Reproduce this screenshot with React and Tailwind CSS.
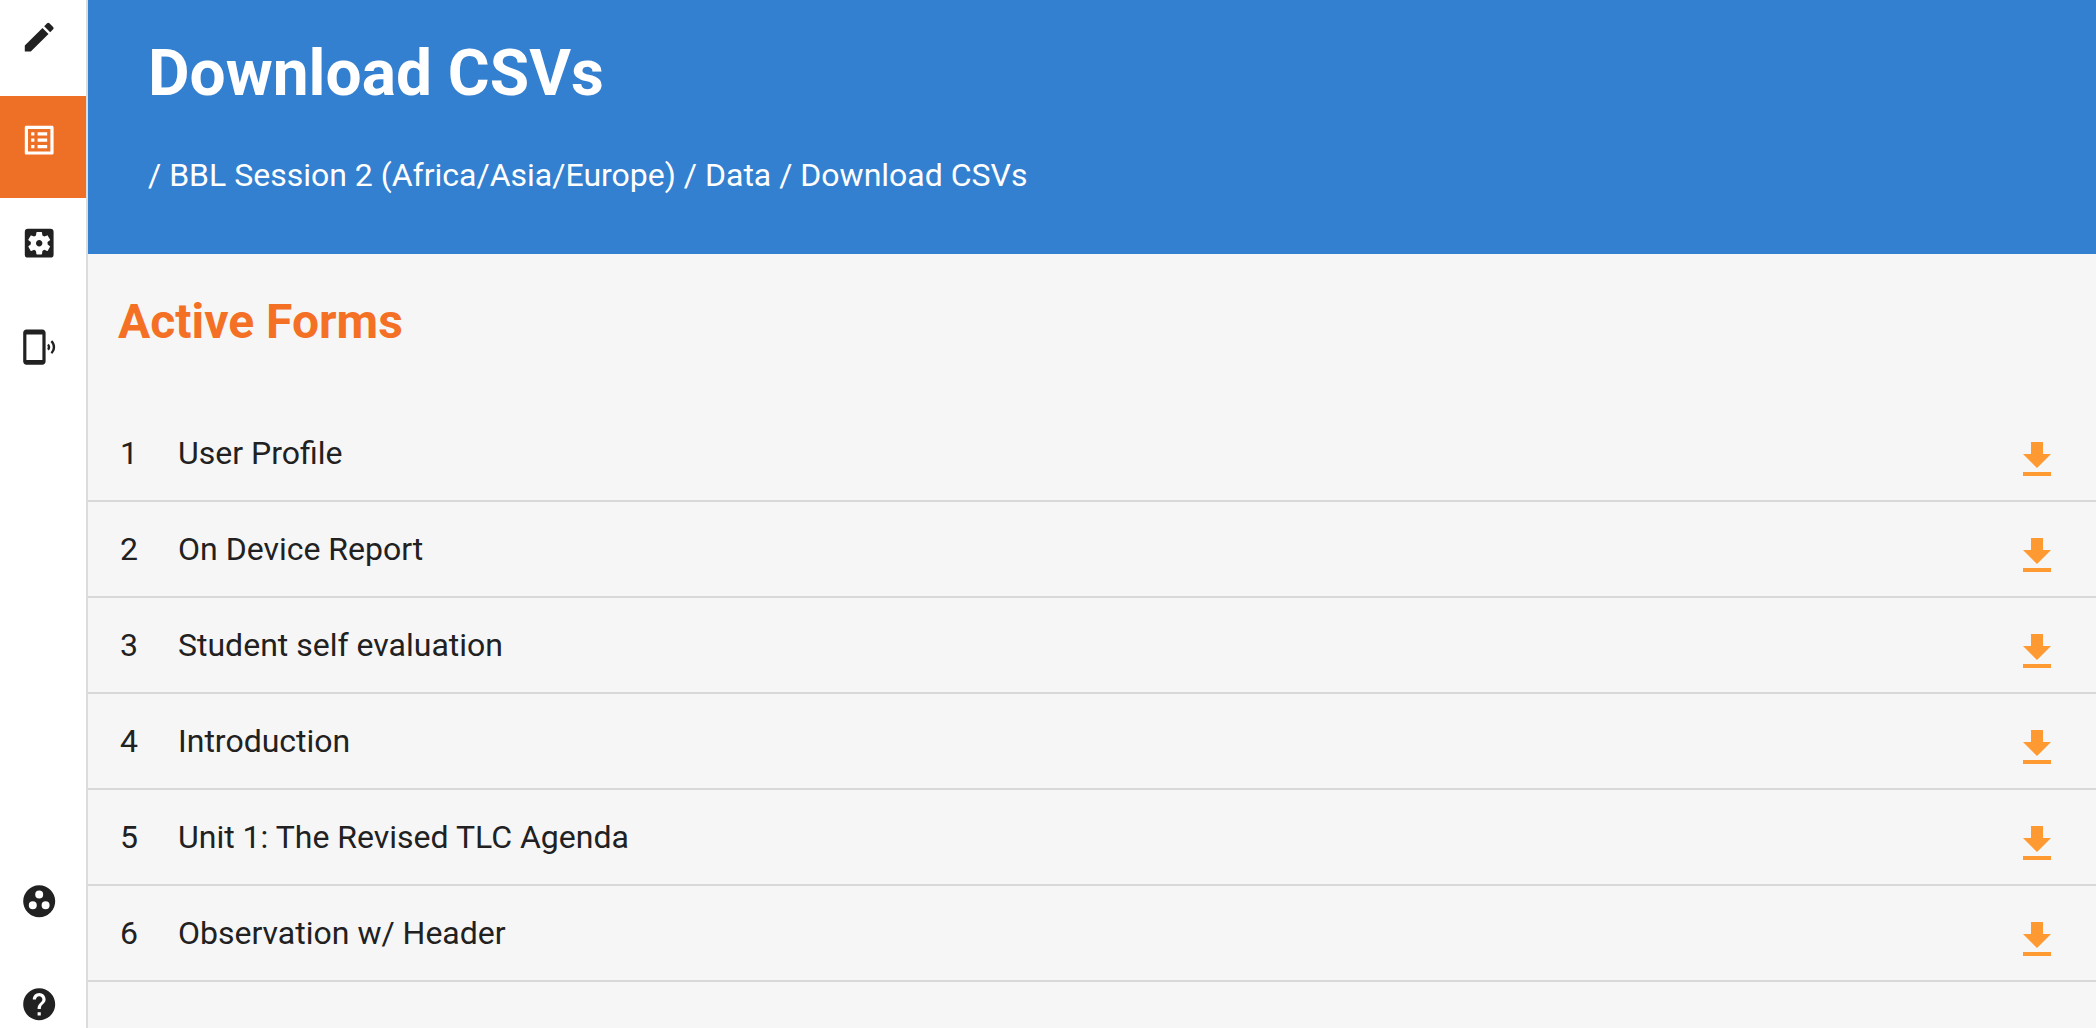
import { MdCreate, MdListAlt, MdSettingsApplications, MdPhonelinkRing, MdHelp, MdFileDownload } from "react-icons/md";

const forms = [
  "User Profile",
  "On Device Report",
  "Student self evaluation",
  "Introduction",
  "Unit 1: The Revised TLC Agenda",
  "Observation w/ Header",
];

// three dots in a circle, the "groups" icon
const GroupsIcon = ({ size }) => (
  <svg width={size} height={size} viewBox="0 0 24 24" fill="currentColor">
    <path
      fillRule="evenodd"
      d="M12 2a10 10 0 1 0 0 20 10 10 0 0 0 0-20zM12 5.3a2.5 2.5 0 1 1 0 5 2.5 2.5 0 0 1 0-5zM8 12a2.5 2.5 0 1 1 0 5 2.5 2.5 0 0 1 0-5zM16 12a2.5 2.5 0 1 1 0 5 2.5 2.5 0 0 1 0-5z"
    />
  </svg>
);

const Sidebar = () => {
  return (
    <div className="w-[88px] shrink-0 flex flex-col justify-between bg-white border-r-2 border-[#dcdcdc] overflow-hidden text-[#212121]">
      <div className="flex flex-col gap-px">
        <div className="h-[95px] pt-[18px] pl-[20px]">
          <MdCreate size={38.4} />
        </div>
        <div className="h-[102px] pt-[25px] pl-[20px] bg-[#ee7027] text-white">
          <MdListAlt size={38.4} />
        </div>
        <div className="h-[102px] pt-[25px] pl-[20px]">
          <MdSettingsApplications size={38.4} />
        </div>
        <div className="h-[102px] pt-[26px] pl-[20px]">
          <MdPhonelinkRing size={38.4} />
        </div>
      </div>
      <div className="flex flex-col gap-px">
        <div className="h-[102px] pt-[25px] pl-[20px]">
          <GroupsIcon size={38.4} />
        </div>
        <div className="h-[68px] pt-[25px] pl-[20px]">
          <MdHelp size={38.4} />
        </div>
      </div>
    </div>
  );
};

export default function App() {
  return (
    <div className="flex h-screen overflow-hidden font-['Roboto',sans-serif]">
      <Sidebar />
      <div className="flex-1 min-w-0 flex flex-col bg-[#f6f6f6]">
        {/* Header */}
        <div className="h-[254px] shrink-0 bg-[#337fd0] text-white pl-[60px] pt-[34px]">
          <h1 className="text-[64px] leading-[80px] font-bold">Download CSVs</h1>
          <p className="mt-[41px] text-[32px] leading-[40px]">
            / BBL Session 2 (Africa/Asia/Europe) / Data / Download CSVs
          </p>
        </div>

        {/* Active Forms */}
        <h2 className="mt-[36px] ml-[30px] text-[48px] leading-[64px] font-bold text-[#f47025]">
          Active Forms
        </h2>
        <div className="mt-[52px] flex flex-col">
          {forms.map((name, i) => (
            <div
              key={name}
              className="h-[96px] flex items-center justify-between border-b-2 border-[#d8d8d8] text-[32px] text-[#212121]"
            >
              <div className="flex items-center pl-[32px]">
                <span className="w-[58px]">{i + 1}</span>
                <span>{name}</span>
              </div>
              <MdFileDownload size={48} className="mr-[35px] mt-[14px] text-[#ff9a33]" />
            </div>
          ))}
        </div>
      </div>
    </div>
  );
}
